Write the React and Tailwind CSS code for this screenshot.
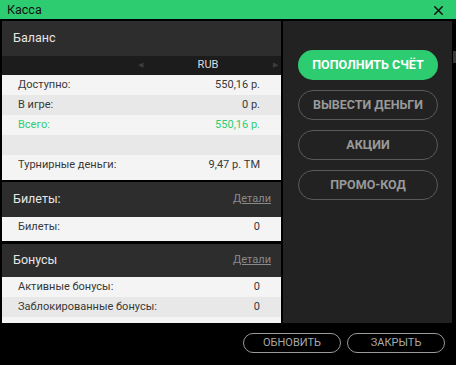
import { X } from 'lucide-react';

const font = { fontFamily: 'Roboto, "Noto Sans", sans-serif' };

function Row({ label, value, shade, green }) {
  return (
    <div
      className={`flex h-[20px] items-center justify-between pl-[16px] pr-[21px] text-[11px] ${
        shade ? 'bg-[#e8e8e8]' : 'bg-[#f4f4f4]'
      } ${green ? 'text-[#2ecc71]' : 'text-[#383838]'}`}
    >
      <span>{label}</span>
      <span>{value}</span>
    </div>
  );
}

function SectionHeader({ title, link, h }) {
  return (
    <div className={`flex ${h} items-center justify-between bg-[#2d2d2d] pl-[11px] pr-[10px]`}>
      <span className="text-[12.5px] text-[#e6e6e6]">{title}</span>
      {link && <span className="text-[11px] text-[#8a8a8a] underline">{link}</span>}
    </div>
  );
}

function SideButton({ children, primary }) {
  return (
    <button
      className={`h-[30px] w-[140px] rounded-full text-[12.5px] font-bold ${
        primary
          ? 'bg-[#2ecc71] text-white'
          : 'border border-[#5a5a5a] text-[#999]'
      }`}
    >
      {children}
    </button>
  );
}

function FooterButton({ children, w }) {
  return (
    <button
      className={`h-[20px] ${w} rounded-full border border-[#9a9a9a] text-[11px] text-[#aaa]`}
    >
      {children}
    </button>
  );
}

export default function App() {
  return (
    <div className="flex h-[365px] w-[456px] flex-col bg-black" style={font}>
      <div className="flex h-[19px] shrink-0 items-center justify-between bg-[#2ecc71] pl-[7px] pr-[10px]">
        <span className="pt-[2px] text-[12.5px] text-[#111]">Касса</span>
        <X size={15} strokeWidth={2.4} className="mt-[1px] text-[#111]" />
      </div>

      <div className="mt-[2px] flex h-[302px] shrink-0 pl-[2px]">
        <div className="flex w-[279px] flex-col">
          <SectionHeader title="Баланс" h="h-[35px]" />
          <div className="flex h-[19px] items-center bg-[#1c1c1c]">
            <div className="ml-[136px] flex w-[140px] items-center justify-between text-[11px] text-[#ddd]">
              <span className="text-[7px] text-[#3c3c3c]">◀</span>
              <span>RUB</span>
              <span className="text-[7px] text-[#3c3c3c]">▶</span>
            </div>
          </div>
          <div className="bg-[#f4f4f4] pb-[5px]">
            <Row label="Доступно:" value="550,16 р." />
            <Row label="В игре:" value="0 р." shade />
            <Row label="Всего:" value="550,16 р." green />
            <Row label="" value="" shade />
            <Row label="Турнирные деньги:" value="9,47 р. TM" />
          </div>

          <div className="mt-[2px]">
            <SectionHeader title="Билеты:" link="Детали" h="h-[35px]" />
            <div className="bg-[#f4f4f4] pb-[4px]">
              <Row label="Билеты:" value="0" />
            </div>
          </div>

          <div className="mt-[3px] flex flex-1 flex-col bg-[#f4f4f4]">
            <SectionHeader title="Бонусы" link="Детали" h="h-[33px]" />
            <Row label="Активные бонусы:" value="0" />
            <Row label="Заблокированные бонусы:" value="0" shade />
          </div>
        </div>

        <div className="ml-[2px] flex w-[169px] flex-col items-center gap-[10px] bg-[#222] pt-[29px] pl-[1px]">
          <SideButton primary>ПОПОЛНИТЬ СЧЁТ</SideButton>
          <SideButton>ВЫВЕСТИ ДЕНЬГИ</SideButton>
          <SideButton>АКЦИИ</SideButton>
          <SideButton>ПРОМО-КОД</SideButton>
        </div>

        <div className="w-[4px] pl-[1px] pt-[30px]">
          <div className="h-[12px] w-[3px] bg-[#3a3a3a]" />
        </div>
      </div>

      <div className="flex flex-1 items-start justify-end gap-[6px] pr-[11px] pt-[10px]">
        <FooterButton w="w-[98px]">ОБНОВИТЬ</FooterButton>
        <FooterButton w="w-[98px]">ЗАКРЫТЬ</FooterButton>
      </div>
    </div>
  );
}
